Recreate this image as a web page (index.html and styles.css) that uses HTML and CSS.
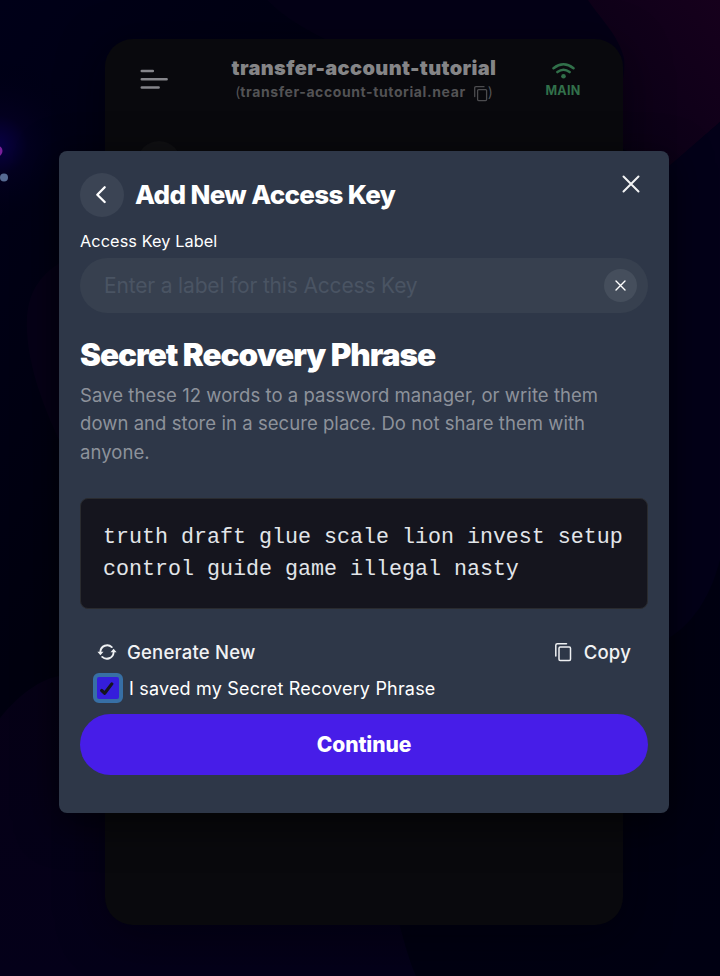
FILE: index.html
```html
<!DOCTYPE html>
<html lang="en">
<head>
<meta charset="utf-8">
<title>Add New Access Key</title>
<link rel="stylesheet" href="styles.css">
</head>
<body>
<svg class="backdrop" viewBox="0 0 720 976" aria-hidden="true">
  <defs>
    <radialGradient id="glow"><stop offset="0" stop-color="#080044"/><stop offset=".35" stop-color="#03001f"/><stop offset="1" stop-color="#000012" stop-opacity="0"/></radialGradient>
    <linearGradient id="base" x1="0" y1="0" x2="1" y2="1"><stop offset="0" stop-color="#000018"/><stop offset=".35" stop-color="#00000f"/><stop offset="1" stop-color="#000012"/></linearGradient>
    <linearGradient id="rose" x1="0" y1="1" x2="1" y2="0"><stop offset="0" stop-color="#080015"/><stop offset="1" stop-color="#16001c"/></linearGradient>
    <linearGradient id="low" x1="0" y1="0" x2="0" y2="1"><stop offset="0" stop-color="#060016"/><stop offset="1" stop-color="#040019"/></linearGradient>
  </defs>
  <rect width="720" height="976" fill="url(#base)"/>
  <path d="M267 0C300 34 350 48 400 75L670 165L720 122V0Z" fill="#040016"/>
  <path d="M588 0C604 23 618 35 624 58C628 90 600 130 625 150L670 166L720 122V0Z" fill="url(#rose)"/>
  <path d="M59 263C34 280 25 300 27 333C29 370 45 410 59 440Z" fill="#060017"/>
  <path d="M669 166L720 122V560C710 600 690 625 669 638Z" fill="#030018"/>
  <path d="M0 718C18 696 38 680 59 676L120 700L380 860C395 900 404 950 416 976H0Z" fill="url(#low)"/>
  <circle cx="-2" cy="145" r="85" fill="url(#glow)"/>
  <circle cx="-3" cy="151" r="5.5" fill="#7a1f9a"/>
  <circle cx="4" cy="177.500" r="4" fill="#566a92"/>
</svg>

<main class="wallet">
  <header class="wallet-bar">
    <svg class="menu" width="28" height="20" viewBox="0 0 28 20"><path d="M1.800 2H12.800M1.800 10.300H26.600M1.800 18.500H18.600" /></svg>
    <div class="account">
      <div class="account-name"><span>transfer-account-tutorial</span></div>
      <div class="account-id">(<b>transfer-account-tutorial.near</b>
        <svg width="14" height="16" viewBox="0 0 14 16"><path d="M.7 10.500V1.900Q.7.700 1.900.700H10"/><rect x="3.600" y="3.600" width="9" height="11" rx="1"/></svg>)</div>
    </div>
    <div class="network">
      <svg width="23" height="16" viewBox="0 0 23 16"><path d="M1.500 5.200Q11.500-2.600 21.500 5.200M5.400 9.100Q11.500 4.300 17.600 9.100"/><circle cx="11.500" cy="13.200" r="2.300"/></svg>
      <span>MAIN</span>
    </div>
  </header>
  <div class="wallet-disc"></div>
</main>

<section class="modal" role="dialog">
  <header class="modal-head">
    <button class="back" aria-label="Back"><svg width="12" height="20" viewBox="0 0 12 20"><path d="M9.700 2.200L2.300 9.800L9.700 17"/></svg></button>
    <h1>Add New Access Key</h1>
    <button class="close" aria-label="Close"><svg width="18" height="18" viewBox="0 0 18 18"><path d="M1.500 1.500L16.500 16.500M16.500 1.500L1.500 16.500"/></svg></button>
  </header>
  <label class="field-label" for="key">Access Key Label</label>
  <div class="field">
    <input id="key" placeholder="Enter a label for this Access Key">
    <button class="clear" aria-label="Clear"><svg width="11" height="11" viewBox="0 0 11 11"><path d="M1 1L10 10M10 1L1 10"/></svg></button>
  </div>
  <h2>Secret Recovery Phrase</h2>
  <p class="hint">Save these 12 words to a password manager, or write them<br>down and store in a secure place. Do not share them with<br>anyone.</p>
  <pre class="phrase">truth draft glue scale lion invest setup
control guide game illegal nasty</pre>
  <div class="actions">
    <button class="action"><svg class="refresh" width="20" height="18" viewBox="0 0 20 18"><path d="M3.400 8.500A6.800 6.800 0 0 1 14.800 4.100M16.600 9.500A6.800 6.800 0 0 1 5.200 13.900"/><path class="tip" d="M.4 8.700H6.500L3.400 12.200ZM13.500 9.300H19.600L16.600 5.800Z"/></svg><span>Generate New</span></button>
    <button class="action copy-action"><svg class="copy" width="18" height="20" viewBox="0 0 18 20"><path d="M1.800 14V3.200Q1.800 1.700 3.300 1.700H12.500"/><rect x="5" y="5" width="11.500" height="13.500" rx="1.200"/></svg><span>Copy</span></button>
  </div>
  <label class="confirm">
    <span class="check"><svg width="14" height="13" viewBox="0 0 14 13"><path d="M1.700 8.500L4.700 11.200L11.800 1.900"/></svg></span>
    <span class="confirm-text">I saved my Secret Recovery Phrase</span>
  </label>
  <button class="continue"><span>Continue</span></button>
</section>
</body>
</html>
```
FILE: styles.css
```css
* { box-sizing: border-box; }
body { margin: 0; width: 720px; height: 976px; overflow: hidden; position: relative; background: #000010; font-family: Inter, "Liberation Sans", sans-serif; color: #fff; }
button { border: 0; padding: 0; background: none; color: inherit; font-family: inherit; }
svg { display: block; fill: none; stroke-linecap: round; stroke-linejoin: round; flex: none; }
span { white-space: nowrap; }
.backdrop { position: absolute; inset: 0; width: 720px; height: 976px; }

.wallet { position: absolute; left: 105px; top: 39px; width: 518px; height: 886px; border-radius: 28px; background: #09090d; box-shadow: 0 10px 45px rgba(0,0,8,.5); overflow: hidden; }
.wallet-bar { display: grid; grid-template-columns: 63px 1fr 63px; padding: 0 35px; height: 102px; column-gap: 5px; }
.menu { margin-top: 30px; stroke: #85858a; stroke-width: 2.600; }
.account { padding-top: 16px; display: flex; flex-direction: column; align-items: center; margin: 0 -20px; }
.account-name { height: 26px; line-height: 26px; font-size: 20px; font-weight: 900; letter-spacing: .35px; color: #858587; }
.account-id { display: flex; height: 22px; line-height: 22px; font-size: 14px; color: #535355; white-space: nowrap; }
.account-id b { letter-spacing: .6px; }
.account-id svg { margin: 5px 0 0 8px; stroke: #4c4c4f; stroke-width: 1.300; }
.network { justify-self: end; width: 50px; display: flex; flex-direction: column; align-items: center; padding-top: 24px; color: #31704a; font-size: 12.500px; font-weight: 700; letter-spacing: .3px; line-height: 23px; }
.network svg { stroke: #31704a; stroke-width: 2.500; }
.network circle { fill: #31704a; stroke: none; }
.wallet-disc { width: 44px; height: 44px; margin-left: 32px; border-radius: 50%; background: #101013; }

.modal { position: absolute; left: 59px; top: 151px; width: 610px; height: 662px; padding: 22px 21px; border-radius: 8px; background: #2e3748; box-shadow: 0 10px 42px rgba(0,0,0,.65); }
.modal-head { display: flex; height: 44px; }
.back { display: grid; place-items: center; width: 44px; height: 44px; border-radius: 50%; background: #3b4454; }
.back svg { margin-right: 2px; stroke: #fff; stroke-width: 2.300; }
h1 { margin: 0 auto 0 11px; font-size: 26px; line-height: 44px; font-weight: 800; letter-spacing: -.65px; white-space: nowrap; }
.close { width: 18px; height: 18px; margin: 2px 8px 0 0; }
.close svg { stroke: #f2f3f4; stroke-width: 2; }
.field-label { display: block; height: 41px; padding-top: 12px; font-size: 16.300px; line-height: 24px; letter-spacing: .08px; }
.field { display: flex; align-items: center; height: 55px; padding: 0 11px 0 24px; border-radius: 28px; background: #37404f; }
input { flex: 1; min-width: 0; border: 0; padding: 0; outline: 0; background: none; font-family: inherit; font-size: 21px; letter-spacing: -.17px; color: #fff; }
input::placeholder { color: #4a5463; opacity: 1; }
.clear { display: grid; place-items: center; width: 33px; height: 33px; border-radius: 50%; background: #454e5c; }
.clear svg { stroke: #fff; stroke-width: 1.400; }
h2 { margin: 22px 0 6px; font-size: 31.500px; line-height: 40px; font-weight: 900; letter-spacing: -1px; }
.hint { height: 86px; margin: 0; font-size: 18.500px; line-height: 28.300px; letter-spacing: .055px; color: #8d929b; white-space: nowrap; }
.phrase { height: 111px; margin: 31px 0 0; padding: 23px 22px; border: 1px solid #2a2b2f; border-radius: 8px; background: #15151e; color: #e2e5e9; font: 21.670px/32px "Liberation Mono", monospace; }
.actions { display: flex; justify-content: space-between; height: 40px; margin: 23px 17px 0 17px; align-items: center; }
.action { display: flex; align-items: center; gap: 10px; font-size: 18.500px; font-weight: 500; letter-spacing: .2px; color: #f1f2f4; }
.copy-action { gap: 12px; }
.refresh { stroke: #eef0f2; stroke-width: 1.900; }
.refresh .tip { fill: #eef0f2; stroke: none; }
.copy { stroke: #eef0f2; stroke-width: 1.500; }
.confirm { display: flex; align-items: center; height: 30px; margin: 1px 0 0 13px; gap: 6px; font-size: 18px; letter-spacing: .18px; }
.confirm-text { padding-top: 1px; }
.check { display: grid; place-items: center; width: 30px; height: 30px; border: 4px solid #376fa5; border-radius: 6px; background: #351edb; }
.check svg { margin-right: 2px; stroke: #15151e; stroke-width: 3.200; }
.continue { display: block; width: 568px; height: 61px; margin-top: 11px; border-radius: 31px; background: #471de8; font-size: 21px; font-weight: 800; letter-spacing: -.1px; }
```
